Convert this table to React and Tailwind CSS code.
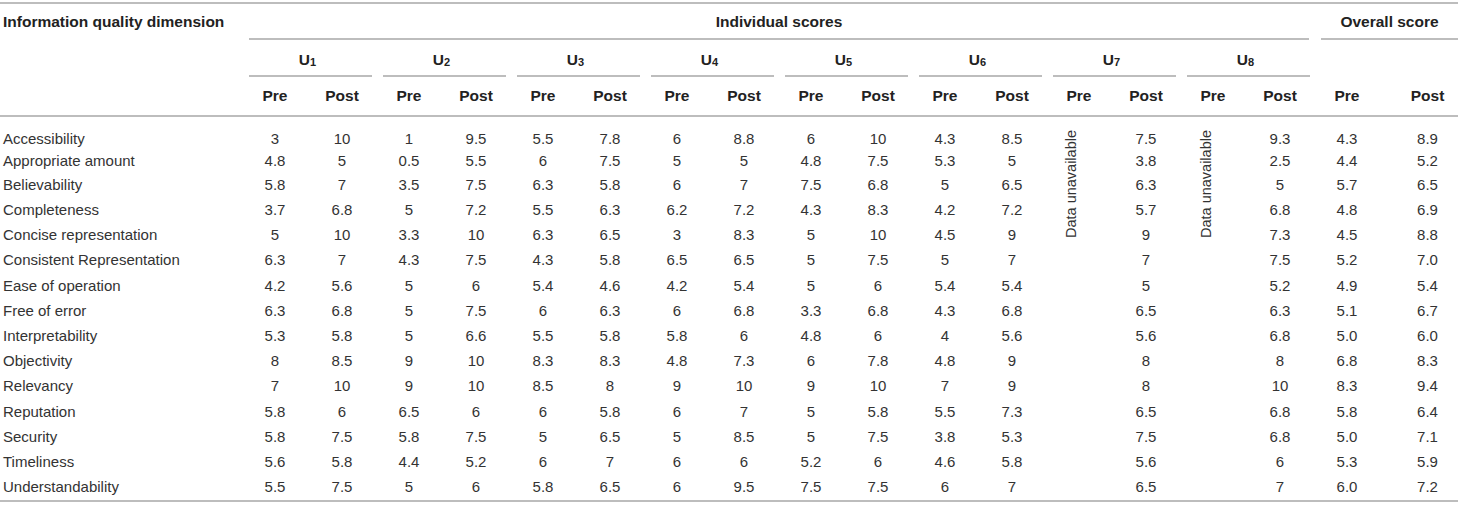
import React from 'react';

const ROWS = [
  ['Accessibility', ['3', '10'], ['1', '9.5'], ['5.5', '7.8'], ['6', '8.8'], ['6', '10'], ['4.3', '8.5'], '7.5', '9.3', ['4.3', '8.9']],
  ['Appropriate amount', ['4.8', '5'], ['0.5', '5.5'], ['6', '7.5'], ['5', '5'], ['4.8', '7.5'], ['5.3', '5'], '3.8', '2.5', ['4.4', '5.2']],
  ['Believability', ['5.8', '7'], ['3.5', '7.5'], ['6.3', '5.8'], ['6', '7'], ['7.5', '6.8'], ['5', '6.5'], '6.3', '5', ['5.7', '6.5']],
  ['Completeness', ['3.7', '6.8'], ['5', '7.2'], ['5.5', '6.3'], ['6.2', '7.2'], ['4.3', '8.3'], ['4.2', '7.2'], '5.7', '6.8', ['4.8', '6.9']],
  ['Concise representation', ['5', '10'], ['3.3', '10'], ['6.3', '6.5'], ['3', '8.3'], ['5', '10'], ['4.5', '9'], '9', '7.3', ['4.5', '8.8']],
  ['Consistent Representation', ['6.3', '7'], ['4.3', '7.5'], ['4.3', '5.8'], ['6.5', '6.5'], ['5', '7.5'], ['5', '7'], '7', '7.5', ['5.2', '7.0']],
  ['Ease of operation', ['4.2', '5.6'], ['5', '6'], ['5.4', '4.6'], ['4.2', '5.4'], ['5', '6'], ['5.4', '5.4'], '5', '5.2', ['4.9', '5.4']],
  ['Free of error', ['6.3', '6.8'], ['5', '7.5'], ['6', '6.3'], ['6', '6.8'], ['3.3', '6.8'], ['4.3', '6.8'], '6.5', '6.3', ['5.1', '6.7']],
  ['Interpretability', ['5.3', '5.8'], ['5', '6.6'], ['5.5', '5.8'], ['5.8', '6'], ['4.8', '6'], ['4', '5.6'], '5.6', '6.8', ['5.0', '6.0']],
  ['Objectivity', ['8', '8.5'], ['9', '10'], ['8.3', '8.3'], ['4.8', '7.3'], ['6', '7.8'], ['4.8', '9'], '8', '8', ['6.8', '8.3']],
  ['Relevancy', ['7', '10'], ['9', '10'], ['8.5', '8'], ['9', '10'], ['9', '10'], ['7', '9'], '8', '10', ['8.3', '9.4']],
  ['Reputation', ['5.8', '6'], ['6.5', '6'], ['6', '5.8'], ['6', '7'], ['5', '5.8'], ['5.5', '7.3'], '6.5', '6.8', ['5.8', '6.4']],
  ['Security', ['5.8', '7.5'], ['5.8', '7.5'], ['5', '6.5'], ['5', '8.5'], ['5', '7.5'], ['3.8', '5.3'], '7.5', '6.8', ['5.0', '7.1']],
  ['Timeliness', ['5.6', '5.8'], ['4.4', '5.2'], ['6', '7'], ['6', '6'], ['5.2', '6'], ['4.6', '5.8'], '5.6', '6', ['5.3', '5.9']],
  ['Understandability', ['5.5', '7.5'], ['5', '6'], ['5.8', '6.5'], ['6', '9.5'], ['7.5', '7.5'], ['6', '7'], '6.5', '7', ['6.0', '7.2']],
];

const USERS = [1, 2, 3, 4, 5, 6, 7, 8];

const COLS = 'grid-cols-[249px_repeat(8,52px_82px)_52px_85px]';

function Cell({ children, className = '' }) {
  return <div className={`flex items-center justify-center ${className}`}>{children}</div>;
}

export default function App() {
  return (
    <div className="bg-white pt-[2px] text-[15px] text-[#222] font-['Liberation_Sans',Arial,sans-serif] w-[1458px]">
      {/* Header */}
      <div className={`grid ${COLS} grid-rows-[36px_37px_38px] border-t-2 border-b-2 border-[#bdbdbd] font-bold text-[15.5px]`}>
        <div className="flex items-center pl-[3px] pt-[2px] border-b-2 border-transparent">Information quality dimension</div>
        <div className="col-span-16 mr-[12px] flex items-center justify-center pt-[2px] border-b-2 border-[#bdbdbd]">
          Individual scores
        </div>
        <div className="col-span-2 flex items-center justify-center pt-[2px] border-b-2 border-[#bdbdbd]">
          Overall score
        </div>

        <div />
        {USERS.map((u) => (
          <div key={u} className="col-span-2 mr-[11px] flex items-center justify-center pt-[4px] pr-[6px] border-b-2 border-[#bdbdbd]">
            U<sub className="text-[11px] relative top-[2px]">{u}</sub>
          </div>
        ))}
        <div className="col-span-2" />

        <div />
        {USERS.map((u) => (
          <React.Fragment key={u}>
            <Cell>Pre</Cell>
            <Cell>Post</Cell>
          </React.Fragment>
        ))}
        <Cell>Pre</Cell>
        <Cell className="pl-[24px]">Post</Cell>
      </div>

      {/* Body */}
      <div
        className={`grid ${COLS} grid-rows-[22px_22.5px_repeat(13,25.2px)] pt-[11px] border-b-2 border-[#bdbdbd] text-[#333]`}
      >
        <div className="col-start-14 row-start-1 row-span-5 flex items-start pl-[10px] pt-[2px]">
          <span className="[writing-mode:vertical-rl] rotate-180 leading-[17px] text-[14.5px]">Data unavailable</span>
        </div>
        <div className="col-start-16 row-start-1 row-span-5 flex items-start pl-[11px] pt-[2px]">
          <span className="[writing-mode:vertical-rl] rotate-180 leading-[17px] text-[14.5px]">Data unavailable</span>
        </div>

        {ROWS.map((row, i) => {
          const [name, u1, u2, u3, u4, u5, u6, u7, u8, overall] = row;
          return (
            <React.Fragment key={name}>
              <div className="flex items-center pl-[3px]">{name}</div>
              {[u1, u2, u3, u4, u5, u6].map((pair, j) => (
                <React.Fragment key={j}>
                  <Cell>{pair[0]}</Cell>
                  <Cell>{pair[1]}</Cell>
                </React.Fragment>
              ))}
              {i >= 5 && <div />}
              <Cell>{u7}</Cell>
              {i >= 5 && <div />}
              <Cell>{u8}</Cell>
              <Cell>{overall[0]}</Cell>
              <Cell className="pl-[24px]">{overall[1]}</Cell>
            </React.Fragment>
          );
        })}
      </div>
    </div>
  );
}
